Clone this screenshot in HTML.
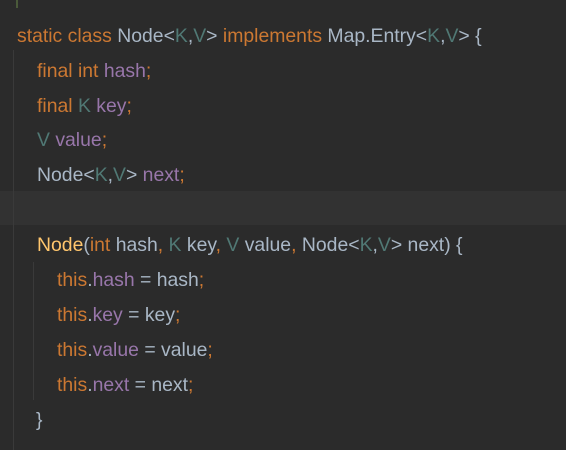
<!DOCTYPE html><html><head><style>
body{margin:0;width:566px;height:450px;background:#2b2b2b;overflow:hidden;position:relative;font-family:"Liberation Sans",sans-serif;font-size:19.4px;color:#a9b7c6}
.l{position:absolute;left:0;height:35px;line-height:35px;white-space:pre}
.k{color:#cc7832}.t{color:#507874}.f{color:#9876aa}.y{color:#ffc66d}
.g{position:absolute;width:1px;background:#3a3a3a}
</style></head><body>
<div style="position:absolute;left:0;top:191px;width:566px;height:34px;background:#323232"></div>
<div class="g" style="left:13px;top:50px;height:400px"></div>
<div class="g" style="left:33px;top:262px;height:138px"></div>
<div style="position:absolute;left:16px;top:0;width:2px;height:8px;background:#4a5a3a"></div>
<div class="l" style="top:19px;left:17px"><span class="k">static class </span>Node&lt;<span class="t">K</span>,<span class="t">V</span>&gt; <span class="k">implements </span>Map.Entry&lt;<span class="t">K</span>,<span class="t">V</span>&gt; {</div>
<div class="l" style="top:54px;left:37px"><span class="k">final int </span><span class="f">hash</span><span class="k">;</span></div>
<div class="l" style="top:89px;left:37px"><span class="k">final </span><span class="t">K </span><span class="f">key</span><span class="k">;</span></div>
<div class="l" style="top:123px;left:37px"><span class="t">V </span><span class="f">value</span><span class="k">;</span></div>
<div class="l" style="top:158px;left:37px">Node&lt;<span class="t">K</span>,<span class="t">V</span>&gt; <span class="f">next</span><span class="k">;</span></div>
<div class="l" style="top:228px;left:37px"><span class="y">Node</span>(<span class="k">int </span>hash<span class="k">, </span><span class="t">K </span>key<span class="k">, </span><span class="t">V </span>value<span class="k">, </span>Node&lt;<span class="t">K</span>,<span class="t">V</span>&gt; next) {</div>
<div class="l" style="top:263px;left:57px"><span class="k">this</span>.<span class="f">hash</span> = hash<span class="k">;</span></div>
<div class="l" style="top:298px;left:57px"><span class="k">this</span>.<span class="f">key</span> = key<span class="k">;</span></div>
<div class="l" style="top:333px;left:57px"><span class="k">this</span>.<span class="f">value</span> = value<span class="k">;</span></div>
<div class="l" style="top:368px;left:57px"><span class="k">this</span>.<span class="f">next</span> = next<span class="k">;</span></div>
<div class="l" style="top:403px;left:36px">}</div>
</body></html>
